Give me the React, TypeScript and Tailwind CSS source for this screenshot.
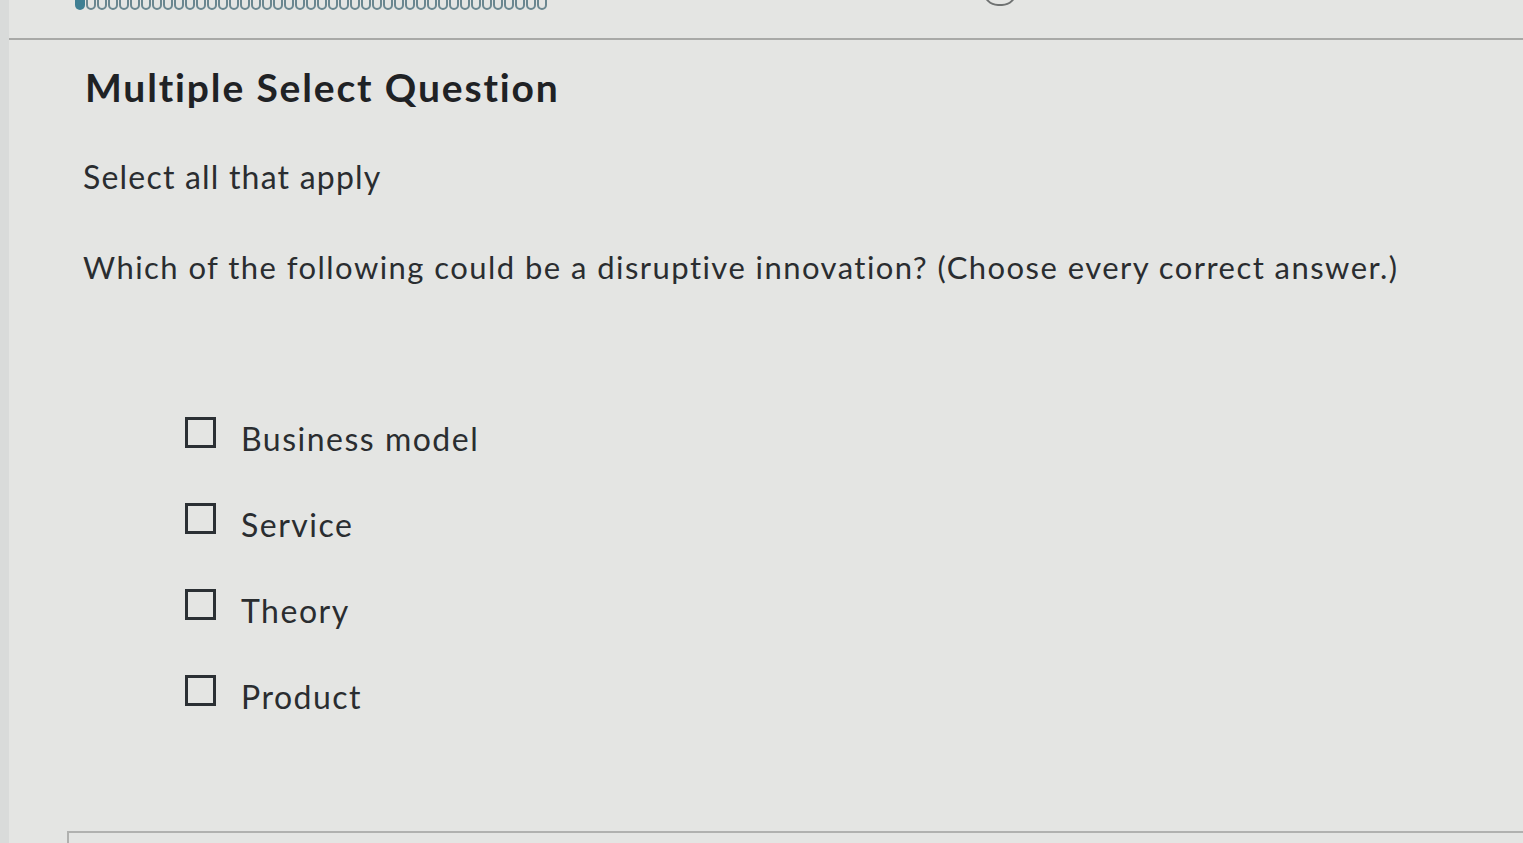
import React from 'react';

const options = ['Business model', 'Service', 'Theory', 'Product'];

const ProgressDots = () => {
    // dotted progress strip at the very top, mostly cut off
    const dots = Array.from({ length: 43 });
    return (
        <div className="flex gap-[1px] -mt-[8px]">
            {dots.map((_, i) => (
                <div
                    key={i}
                    className={
                        i === 0
                            ? 'w-[10px] h-[18px] rounded-full bg-[#3f7f93]'
                            : 'w-[10px] h-[18px] rounded-full border-2 border-[#6b8790]'
                    }
                />
            ))}
        </div>
    );
};

export default function App() {
    return (
        <div
            className="w-[1523px] h-[843px] overflow-hidden bg-[#e4e5e3] flex text-[#2a2d30]"
            style={{ fontFamily: 'Lato, "Noto Sans", sans-serif' }}
        >
            <div className="w-[9px] shrink-0 bg-[#d9dbda]" />
            <div className="flex-1 flex flex-col">
                {/* header strip */}
                <div className="h-[40px] shrink-0 border-b-2 border-[#a8a9a7] flex items-start relative">
                    <div className="ml-[66px]">
                        <ProgressDots />
                    </div>
                    <div className="absolute left-[974px] -top-[24px] w-[34px] h-[30px] rounded-full border-2 border-[#6f7272]" />
                </div>

                <div className="flex-1 flex flex-col pl-[76px]">
                    <h1 className="mt-[22px] text-[39px] leading-[50px] font-bold tracking-[1.85px] text-[#1f2225]">
                        Multiple Select Question
                    </h1>
                    <p className="mt-[45px] text-[32px] leading-[40px] -ml-[2px] tracking-[1.2px]">Select all that apply</p>
                    <p className="mt-[50px] text-[31px] leading-[40px] -ml-[2px] tracking-[1.45px]">
                        Which of the following could be a disruptive innovation? (Choose every correct answer.)
                    </p>

                    <div className="mt-[124px] ml-[100px] flex flex-col gap-[44px]">
                        {options.map((opt) => (
                            <label key={opt} className="flex items-center gap-[25px] h-[42px]">
                                <span className="w-[31px] h-[31px] border-[3px] border-[#2b3034] shrink-0" />
                                <span className="text-[32px] leading-[42px] mt-[14px] tracking-[1.5px]">{opt}</span>
                            </label>
                        ))}
                    </div>

                    <div className="mt-auto -ml-[18px] h-[12px] border-t-2 border-l-2 border-[#b0b1af]" />
                </div>
            </div>
        </div>
    );
}
